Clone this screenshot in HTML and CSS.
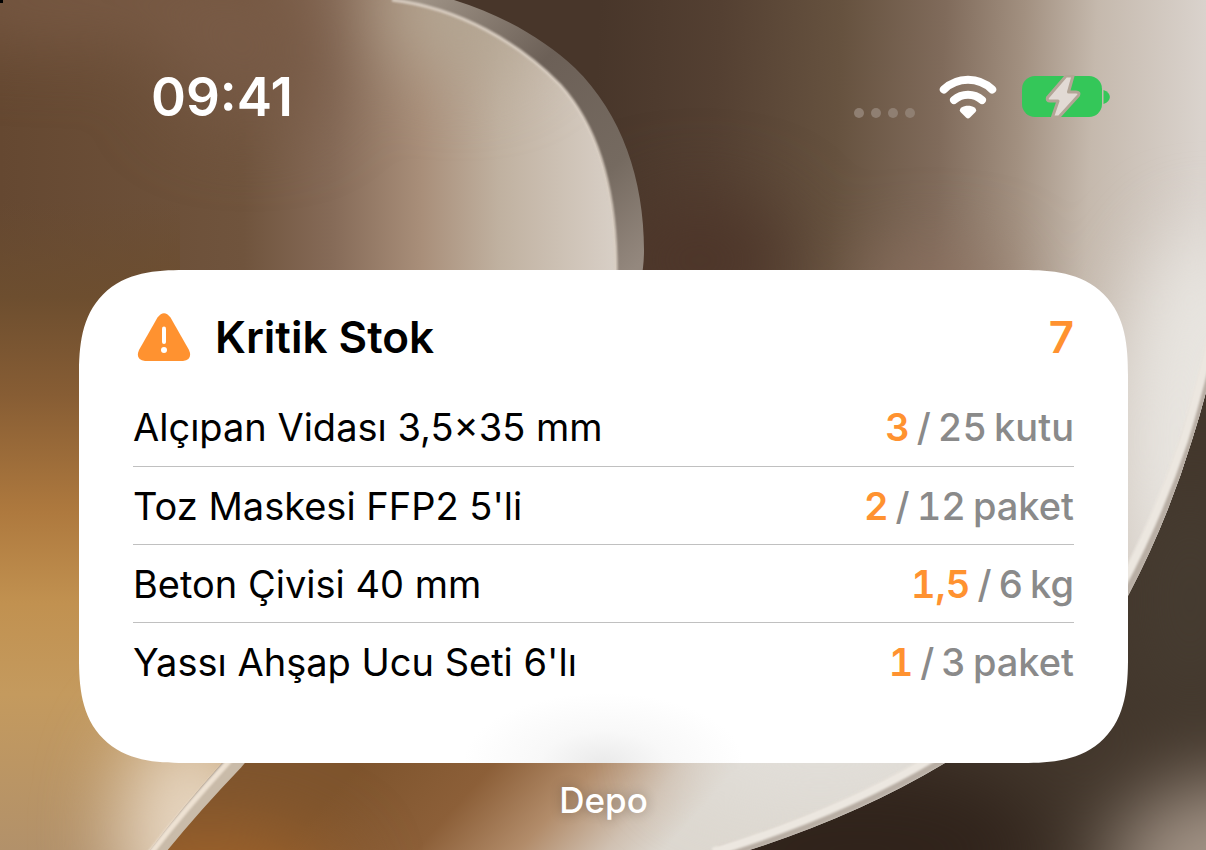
FILE: index.html
```html
<!DOCTYPE html>
<html lang="tr">
<head>
    <meta charset="UTF-8">
    <meta name="viewport" content="width=device-width, initial-scale=1.0">
    <title>Kritik Stok</title>
    <link rel="stylesheet" href="styles.css">
</head>
<body>
    <svg class="wallpaper" viewBox="0 0 1206 850" preserveAspectRatio="xMidYMid slice" aria-hidden="true">
        <defs>
            <linearGradient id="rightFill" gradientUnits="userSpaceOnUse" x1="600" y1="0" x2="1206" y2="30">
                <stop offset="0" stop-color="#48362a"/>
                <stop offset="0.2" stop-color="#544032"/>
                <stop offset="0.4" stop-color="#66523f"/>
                <stop offset="0.57" stop-color="#806b5b"/>
                <stop offset="0.7" stop-color="#a29080"/>
                <stop offset="0.82" stop-color="#c5b9ad"/>
                <stop offset="1" stop-color="#dad3cd"/>
            </linearGradient>
            <linearGradient id="lowerFill" gradientUnits="userSpaceOnUse" x1="400" y1="720" x2="610" y2="910">
                <stop offset="0" stop-color="#7e542d"/>
                <stop offset="0.35" stop-color="#8c5f38"/>
                <stop offset="0.62" stop-color="#b28c6a"/>
                <stop offset="0.85" stop-color="#d0c1b2"/>
                <stop offset="1" stop-color="#ddd8d0"/>
            </linearGradient>
            <linearGradient id="leftFill" gradientUnits="userSpaceOnUse" x1="0" y1="0" x2="640" y2="0">
                <stop offset="0" stop-color="#654831"/>
                <stop offset="0.38" stop-color="#70543d"/>
                <stop offset="0.52" stop-color="#866b58"/>
                <stop offset="0.66" stop-color="#a98f7a"/>
                <stop offset="0.78" stop-color="#c0b1a0"/>
                <stop offset="0.96" stop-color="#d8cfc6"/>
            </linearGradient>
            <linearGradient id="amber" gradientUnits="userSpaceOnUse" x1="0" y1="200" x2="0" y2="850">
                <stop offset="0" stop-color="#6a4c2f" stop-opacity="0"/>
                <stop offset="0.15" stop-color="#6d4e2f"/>
                <stop offset="0.3" stop-color="#875d34"/>
                <stop offset="0.48" stop-color="#ae793e"/>
                <stop offset="0.62" stop-color="#c19150"/>
                <stop offset="0.76" stop-color="#c49a5e"/>
                <stop offset="1" stop-color="#b2916a"/>
            </linearGradient>
            <linearGradient id="rim" gradientUnits="userSpaceOnUse" x1="400" y1="0" x2="644" y2="260">
                <stop offset="0" stop-color="#a3978a"/>
                <stop offset="0.4" stop-color="#6c6057"/>
                <stop offset="0.75" stop-color="#756a60"/>
                <stop offset="1" stop-color="#94887e"/>
            </linearGradient>
            <filter id="soft" x="-150%" y="-200%" width="400%" height="500%" color-interpolation-filters="sRGB">
                <feGaussianBlur stdDeviation="40"/>
            </filter>
            <filter id="edge" x="-10%" y="-10%" width="120%" height="120%" color-interpolation-filters="sRGB">
                <feGaussianBlur stdDeviation="1"/>
            </filter>
            <clipPath id="rightShape">
                <path d="M0 0H1230V280Q1214 372 1192 440Q1167 522 1128 596Q1064 692 945 763Q850 820 730 856H0Z"/>
            </clipPath>
            <clipPath id="leftShape">
                <path d="M0 0H392C460 8 520 44 560 85C595 124 616 185 616 270C610 400 400 570 222 763Q180 810 150 850H0Z"/>
            </clipPath>
        </defs>

        <!-- dark backdrop -->
        <rect width="1206" height="850" fill="#43372c"/>
        <g filter="url(#soft)">
            <ellipse cx="860" cy="850" rx="190" ry="90" fill="#30231b"/>
            <ellipse cx="1190" cy="600" rx="60" ry="120" fill="#463c31"/>
            <ellipse cx="1240" cy="870" rx="130" ry="90" fill="#a39487"/>
        </g>

        <!-- right petal -->
        <g clip-path="url(#rightShape)">
            <rect width="1230" height="600" fill="url(#rightFill)"/>
            <rect y="600" width="1230" height="256" fill="url(#lowerFill)"/>
            <g filter="url(#soft)">
                <ellipse cx="700" cy="260" rx="90" ry="60" fill="#4d3529"/>
                <ellipse cx="930" cy="290" rx="80" ry="30" fill="#8f7261"/>
                <ellipse cx="1210" cy="440" rx="90" ry="210" fill="#e8e5e0"/>
                <ellipse cx="210" cy="890" rx="130" ry="60" fill="#a0632a"/>
                <ellipse cx="820" cy="750" rx="150" ry="50" fill="#e2dfda"/>
            </g>
            <path d="M1228 280Q1210 372 1188 440Q1162 520 1123 592Q1058 687 939 759Q844 815 720 853" fill="none" stroke="#b8aea4" stroke-width="14" filter="url(#edge)"/>
            <path d="M1224 280Q1205 371 1184 439Q1158 517 1119 590Q1053 682 934 757Q840 813 713 852" fill="none" stroke="#ece7e0" stroke-width="9" filter="url(#edge)"/>
        </g>

        <!-- left petal -->
        <path d="M0 0H454C505 16 545 40 575 68C622 114 644 180 644 250C644 400 430 540 243 763Q200 810 166 850H0Z" fill="url(#rim)"/>
        <g clip-path="url(#leftShape)">
            <rect width="650" height="850" fill="url(#leftFill)"/>
            <path d="M0 200H180V700H650V850H0Z" fill="url(#amber)"/>
            <g filter="url(#soft)">
                <ellipse cx="100" cy="0" rx="230" ry="34" fill="#7c5d48"/>
                <ellipse cx="250" cy="70" rx="80" ry="50" fill="#775a46"/>
                <ellipse cx="460" cy="10" rx="80" ry="60" fill="#b3a592"/>
                <ellipse cx="190" cy="830" rx="70" ry="110" fill="#e8d8c4"/>
            </g>
        </g>
        <path d="M392 0C460 8 520 44 560 85C595 124 616 185 616 270V300" fill="none" stroke="#d9cec2" stroke-width="3" filter="url(#edge)"/>
        <path d="M254 743L237 763Q192 810 160 850L152 860" fill="none" stroke="#c9bba9" stroke-width="12"/>
        <path d="M244 743L227 763Q184 810 153 850L145 860" fill="none" stroke="#eee2d3" stroke-width="6" filter="url(#edge)"/>
        <rect width="3" height="3" fill="#000"/>
    </svg>

    <header class="status-bar">
        <time class="clock">09:41</time>
        <div class="status-icons">
            <svg class="signal" viewBox="0 0 62 12" role="img" aria-label="Sinyal">
                <circle cx="5" cy="6" r="5"/>
                <circle cx="22" cy="6" r="5"/>
                <circle cx="39" cy="6" r="5"/>
                <circle cx="56" cy="6" r="5"/>
            </svg>
            <svg class="wifi" viewBox="0 0 58 44" role="img" aria-label="Wi-Fi">
                <path d="M4.800 14.500A35 35 0 0 1 53.200 14.500" fill="none" stroke="#fff" stroke-width="8" stroke-linecap="round"/>
                <path d="M15 25A21 21 0 0 1 43 25" fill="none" stroke="#fff" stroke-width="8" stroke-linecap="round"/>
                <path d="M22.500 32.500C26 30.300 32 30.300 35.500 32.500Q38.500 35 36 37.500L31 42.500Q29 44.500 27 42.500L22 37.500Q19.500 35 22.500 32.500Z" fill="#fff"/>
            </svg>
            <svg class="battery" viewBox="0 0 88 44" role="img" aria-label="Pil şarj oluyor">
                <rect y="1" width="80" height="41" rx="13" fill="#34c759"/>
                <path d="M81.500 15C90 18 90 26 81.500 29Z" fill="#34c759"/>
                <path d="M44 1L25.500 22.500Q24.500 26 28 26H36L30.500 42H37L56.500 20.500Q58 17 54 17H46.500L51 1Z" fill="#e2dad4" stroke="#b3a596" stroke-width="3" stroke-linejoin="round"/>
            </svg>
        </div>
    </header>

    <main class="widget">
        <section class="card">
            <div class="card-header">
                <svg class="warning-icon" viewBox="0 0 54 48" aria-hidden="true">
                    <path d="M20.500 4.500Q27 -4 33.500 4.500L52 37Q56 46.500 46 48H8Q-2 46.500 2 37Z" fill="#ff9230"/>
                    <path d="M27 15.500V29" stroke="#fff" stroke-width="4" stroke-linecap="round"/>
                    <circle cx="27" cy="37" r="3" fill="#fff"/>
                </svg>
                <h1 class="card-title">Kritik Stok</h1>
                <span class="card-count">7</span>
            </div>
            <ul class="stock-list">
                <li class="stock-item">
                    <span class="name">Alçıpan Vidası 3,5×35 mm</span>
                    <span class="amount"><b>3</b><span>/</span><span>25</span><span>kutu</span></span>
                </li>
                <li class="stock-item">
                    <span class="name">Toz Maskesi FFP2 5'li</span>
                    <span class="amount"><b>2</b><span>/</span><span>12</span><span>paket</span></span>
                </li>
                <li class="stock-item">
                    <span class="name">Beton Çivisi 40 mm</span>
                    <span class="amount"><b>1,5</b><span>/</span><span>6</span><span>kg</span></span>
                </li>
                <li class="stock-item">
                    <span class="name">Yassı Ahşap Ucu Seti 6'lı</span>
                    <span class="amount"><b>1</b><span>/</span><span>3</span><span>paket</span></span>
                </li>
            </ul>
        </section>
        <p class="widget-label">Depo</p>
    </main>
</body>
</html>
```
FILE: styles.css
```css
* {
    margin: 0;
    padding: 0;
    box-sizing: border-box;
}

:root {
    --orange: #ff9230;
    --gray: #8a8a8a;
    --line: #c0c0c0;
}

body {
    position: relative;
    min-height: 100vh;
    overflow: hidden;
    font-family: Inter, "Liberation Sans", sans-serif;
    color: #000;
    background-color: #42362b;
}

.wallpaper {
    position: absolute;
    top: 0;
    left: 0;
    width: 100%;
    height: 100%;
    z-index: -1;
}

/* Status bar */
.status-bar {
    display: flex;
    justify-content: space-between;
    align-items: flex-start;
    padding: 66px 96px 0 151px;
    height: 270px;
}

.clock {
    font-size: 53px;
    line-height: 62px;
    font-weight: 600;
    color: #fff;
}

.status-icons {
    display: flex;
    align-items: flex-end;
    padding-top: 9px;
}

.signal {
    width: 62px;
    height: 12px;
    fill: #8f7f72;
}

.wifi {
    width: 58px;
    height: 44px;
    margin: 0 25px 0 23px;
}

.battery {
    width: 88px;
    height: 44px;
}

/* Widget */
.widget {
    padding: 0 78px 0 79px;
}

.card {
    padding: 35px 54px 63px;
    border-radius: 84px;
    background: radial-gradient(ellipse 140px 70px at 50% 100%, #eaeaea, #f8f8f8 45%, #fff) #fff;
}

@supports (corner-shape: superellipse(1.4)) {
    .card {
        border-radius: 105px;
        corner-shape: superellipse(1.4);
    }
}

.card-header {
    display: flex;
    align-items: center;
    height: 64px;
    margin-bottom: 19px;
    font-size: 44px;
}

.warning-icon {
    width: 54px;
    height: 48px;
    margin: 0 24px 0 4px;
}

.card-title {
    font-size: 44px;
    font-weight: 600;
}

.card-count {
    margin-left: auto;
    font-weight: 600;
    color: var(--orange);
}

.stock-list {
    list-style: none;
}

.stock-item {
    display: flex;
    justify-content: space-between;
    align-items: center;
    height: 78px;
    font-size: 38px;
}

.stock-item + .stock-item {
    border-top: 1px solid var(--line);
}

.amount {
    display: flex;
    gap: 7px;
    font-weight: 500;
    color: var(--gray);
    font-variant-numeric: tabular-nums;
}

.amount b {
    font-weight: 600;
    color: var(--orange);
}

.widget-label {
    margin-top: 16px;
    font-size: 35px;
    line-height: 42px;
    font-weight: 500;
    text-align: center;
    color: #fff;
    text-shadow: 0 0 12px rgba(0, 0, 0, 0.3);
}
```
